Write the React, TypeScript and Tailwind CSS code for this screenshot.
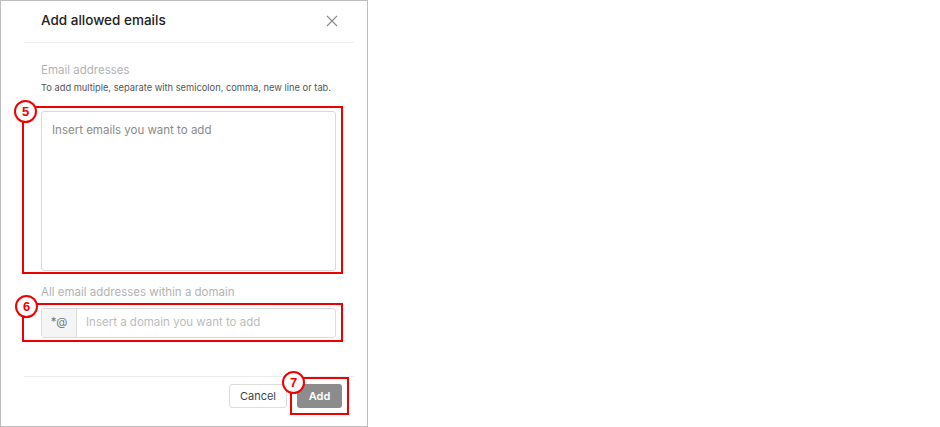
import React from "react";

function Badge({ n, className }: { n: string; className: string }) {
  return (
    <div
      className={
        "absolute w-[23px] h-[23px] rounded-full border-[2.5px] border-[#f00000] bg-white flex items-center justify-center text-[#f00000] text-[13px] font-bold leading-none " +
        className
      }
      style={{ fontFamily: "'Liberation Sans', Arial, sans-serif" }}
    >
      {n}
    </div>
  );
}

export default function App() {
  return (
    <div
      className="w-[940px] h-[427px] bg-white"
      style={{ fontFamily: "Inter, 'Noto Sans', sans-serif" }}
    >
      <div className="w-[368px] h-[427px] border border-[#bdbdbd] flex flex-col">
        {/* Header */}
        <div className="ml-[23px] mr-[13px] h-[42px] border-b border-[#ececec] flex items-center justify-between pl-[17px] pr-[15px] pb-[2px]">
          <div className="text-[13.5px] font-medium text-[#222]">Add allowed emails</div>
          <svg width="12" height="12" viewBox="0 0 12 12" className="mr-[1px]">
            <path d="M1 1 L11 11 M11 1 L1 11" stroke="#8a8a8a" strokeWidth="1.1" fill="none" />
          </svg>
        </div>

        {/* Body */}
        <div className="pl-[40px] pt-[19px] flex flex-col">
          <div className="text-[11.5px] leading-[16px] text-[#b3b3b3]">Email addresses</div>
          <div className="mt-[3px] text-[9.3px] leading-[14px] text-[#555]">
            To add multiple, separate with semicolon, comma, new line or tab.
          </div>

          <div className="relative mt-[16px] w-[295px] h-[160px]">
            <div className="w-full h-full border border-[#d9d9d9] rounded-[3px] px-[10px] pt-[10px] text-[11.5px] leading-[16px] text-[#8a8a8a]">
              Insert emails you want to add
            </div>
            <div className="absolute -left-[19px] -top-[5px] -right-[7px] -bottom-[3px] border-2 border-[#f00000] pointer-events-none" />
            <Badge n="5" className="-left-[27px] -top-[11px]" />
          </div>

          <div className="mt-[13px] text-[11.5px] leading-[16px] text-[#b3b3b3]">
            All email addresses within a domain
          </div>

          <div className="relative mt-[8px] w-[295px] h-[30px]">
            <div className="w-full h-full border border-[#dcdcdc] rounded-[3px] flex">
              <div className="w-[35px] h-full bg-[#f5f5f5] border-r border-[#dcdcdc] flex items-center justify-center text-[11.5px] text-[#777]">
                *@
              </div>
              <div className="flex items-center pl-[9px] text-[11.5px] text-[#bcbcbc]">
                Insert a domain you want to add
              </div>
            </div>
            <div className="absolute -left-[19px] -top-[5px] -right-[7px] -bottom-[4px] border-2 border-[#f00000] pointer-events-none" />
            <Badge n="6" className="-left-[26px] -top-[13px]" />
          </div>
        </div>

        {/* Footer */}
        <div className="mt-[38px] ml-[23px] mr-[13px] border-t border-[#ececec]" />
        <div className="flex justify-end pt-[7px] pr-[25px] gap-[10px]">
          <div className="h-[24px] w-[58px] border border-[#dcdcdc] rounded-[3px] flex items-center justify-center text-[11px] text-[#444]">
            Cancel
          </div>
          <div className="relative h-[24px] w-[45px]">
            <div className="w-full h-full bg-[#8c8c8c] rounded-[3px] flex items-center justify-center text-[11px] font-semibold text-white">
              Add
            </div>
            <div className="absolute -left-[7px] -top-[7px] -right-[7px] -bottom-[7px] border-2 border-[#f00000] pointer-events-none" />
            <Badge n="7" className="-left-[15px] -top-[13px]" />
          </div>
        </div>
      </div>
    </div>
  );
}
